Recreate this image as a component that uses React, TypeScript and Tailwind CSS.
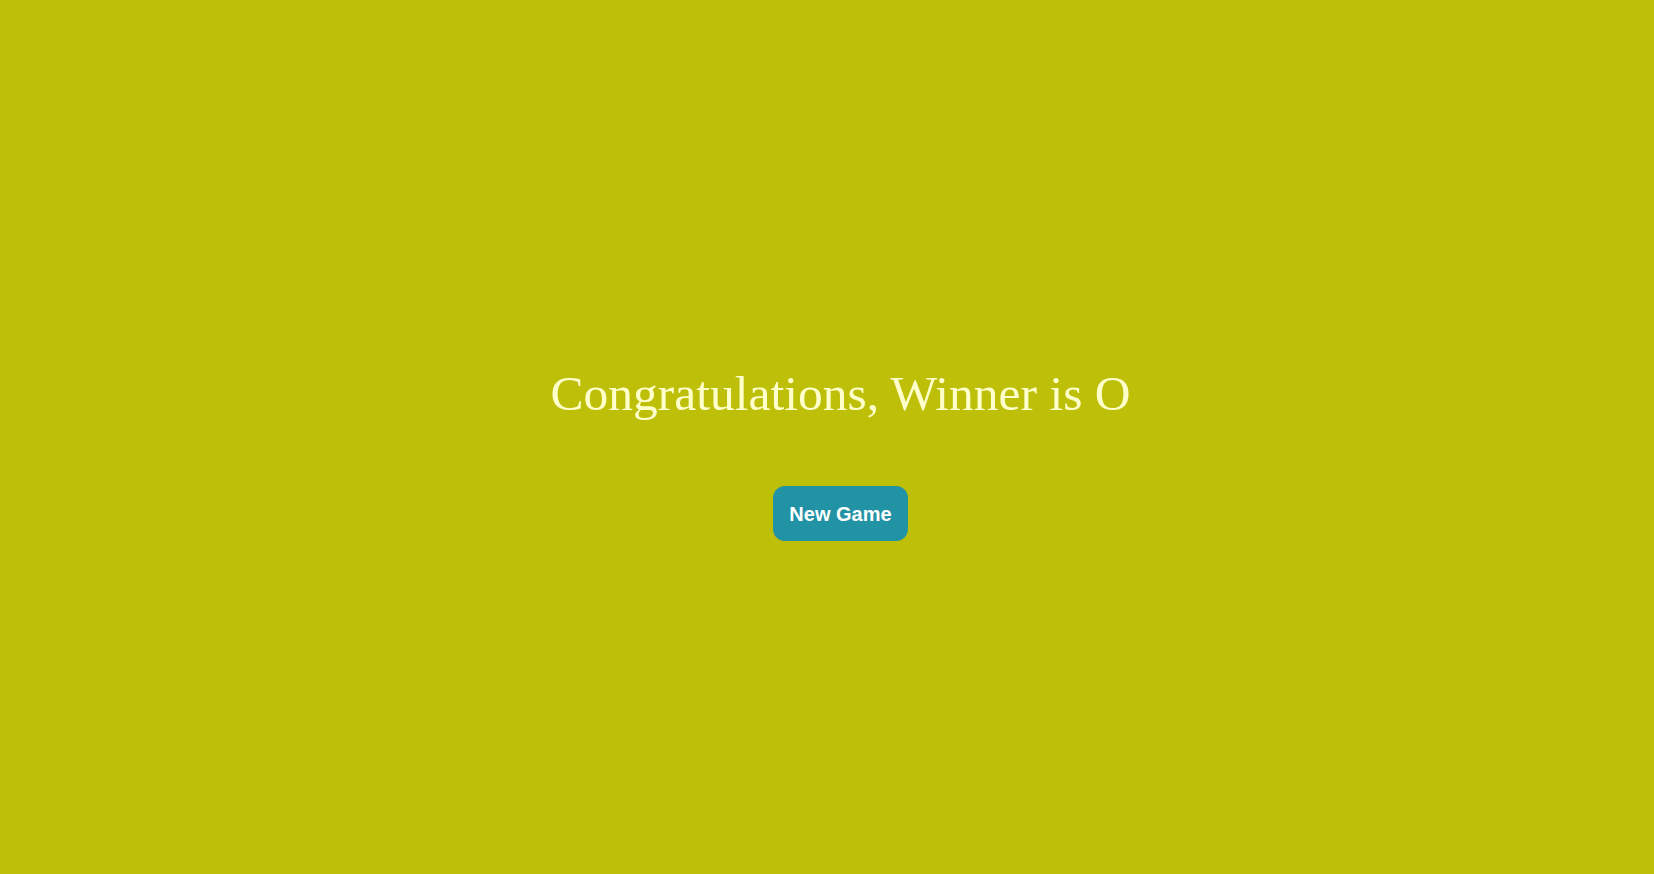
import React from "react";

export default function App() {
  return (
    <div className="min-h-screen w-full bg-[#bebf08] flex flex-col items-center justify-center pl-[27px] pt-[33px]">
      <h1 className="text-[49.5px] leading-[55px] text-[#ffffcc] font-['Liberation_Serif',serif] font-normal">
        Congratulations, Winner is O
      </h1>
      <button className="mt-[65px] h-[55px] w-[135px] rounded-[12px] bg-[#2292a5] text-white text-[20px] font-bold font-['Liberation_Sans',Arial,sans-serif] cursor-pointer">
        New Game
      </button>
    </div>
  );
}
